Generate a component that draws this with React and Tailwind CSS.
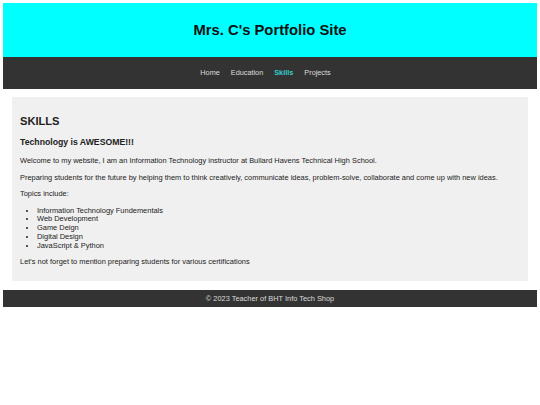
export default function App() {
  const topics = [
    'Information Technology Fundementals',
    'Web Development',
    'Game Deign',
    'Digital Design',
    'JavaScript & Python',
  ]

  return (
    <div className="min-h-[405px] bg-white p-[3px] font-['Liberation_Sans',Arial,sans-serif] text-[#222]">
      {/* Header */}
      <header className="flex h-[54px] items-center justify-center bg-[#00ffff]">
        <h1 className="text-[14.8px] font-bold leading-none text-[#111]">Mrs. C's Portfolio Site</h1>
      </header>

      {/* Nav */}
      <nav className="flex h-[32px] items-center justify-center gap-[11px] bg-[#333] pr-[9px] text-[7.3px] text-[#ddd]">
        <a>Home</a>
        <a>Education</a>
        <a className="font-bold text-[#33cccc]">Skills</a>
        <a>Projects</a>
      </nav>

      {/* Main content */}
      <main className="mx-[9px] mt-[8px] bg-[#f0f0f0] px-[8px] pt-[16.6px] pb-[15px] text-[7.45px]">
        <h2 className="text-[11.1px] font-bold leading-[15px]">SKILLS</h2>
        <h3 className="mt-[8px] text-[8.7px] font-bold leading-[11px]">Technology is AWESOME!!!</h3>
        <p className="mt-[9.4px] leading-[8px]">
          Welcome to my website, I am an Information Technology instructor at Bullard Havens Technical High School.
        </p>
        <p className="mt-[9px] leading-[8px]">
          Preparing students for the future by helping them to think creatively, communicate ideas, problem-solve, collaborate and come up with new ideas.
        </p>
        <p className="mt-[8px] leading-[8px]">Topics include:</p>
        <ul className="mt-[8.7px] list-disc pl-[17px] leading-[8.75px]">
          {topics.map((t) => (
            <li key={t}>{t}</li>
          ))}
        </ul>
        <p className="mt-[7.5px] leading-[8px]">
          Let's not forget to mention preparing students for various certifications
        </p>
      </main>

      {/* Footer */}
      <footer className="mt-[9px] flex h-[17px] items-center justify-center bg-[#333] text-[7.4px] text-[#ddd]">
        © 2023 Teacher of BHT Info Tech Shop
      </footer>
    </div>
  )
}
